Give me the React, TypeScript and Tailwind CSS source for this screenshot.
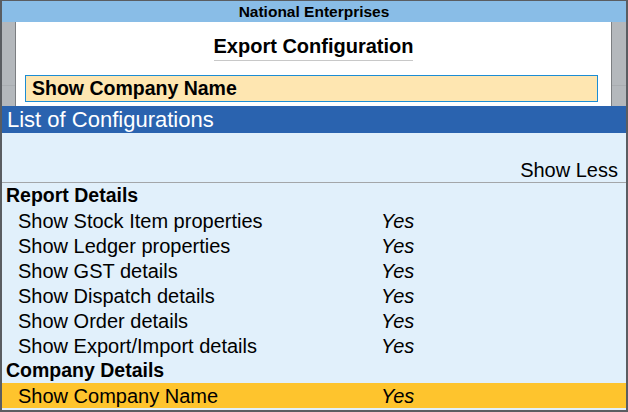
const reportRows = [
  "Show Stock Item properties",
  "Show Ledger properties",
  "Show GST details",
  "Show Dispatch details",
  "Show Order details",
  "Show Export/Import details",
]

function Row({ label, active }: { label: string; active?: boolean }) {
  return (
    <div className={`flex h-[25px] items-center text-[20px] ${active ? "bg-[#fec42d]" : ""}`}>
      <span className="w-[379px] pl-[16px]">{label}</span>
      <span className="italic">Yes</span>
    </div>
  )
}

export default function App() {
  return (
    <div
      className="w-[628px] h-[412px] overflow-hidden border-2 border-t border-[#5a5d61] text-black"
      style={{ fontFamily: '"Liberation Sans", Arial, sans-serif' }}
    >
      {/* Title bar */}
      <div className="h-[21px] bg-[#89bde7] flex items-center justify-center text-[15.5px] font-bold">
        National Enterprises
      </div>

      {/* Header panel */}
      <div className="flex h-[84px]">
        <div className="w-[14px] bg-[#b4b8bc] border-r border-[#7c7f82] flex flex-col">
          <div className="h-[64px] border-b border-[#a9adb1]" />
        </div>
        <div className="flex-1 bg-white flex flex-col items-center">
          <div className="mt-[13px] pb-[3px] border-b border-[#c8c8c8] text-[20px] font-bold leading-[22px]">
            Export Configuration
          </div>
          <div className="mt-[14px] w-[573px] h-[27px] bg-[#fee6b1] border border-[#1c8dd4] flex items-center pl-[6px] text-[19.5px] font-bold self-start ml-[9px]">
            Show Company Name
          </div>
        </div>
        <div className="w-[15px] bg-[#b4b8bc] border-l border-[#7c7f82] flex flex-col">
          <div className="h-[64px] border-b border-[#a9adb1]" />
        </div>
      </div>

      {/* Section bar */}
      <div className="h-[27px] bg-[#2a63af] text-white text-[22px] flex items-center pl-[5px]">
        List of Configurations
      </div>

      {/* List */}
      <div className="bg-[#e1f0fb] h-[277px]">
        <div className="h-[25px]" />
        <div className="h-[25px] flex items-center justify-end pr-[8px] text-[20px] border-b border-[#a3a6a9]">
          Show Less
        </div>
        <div className="h-[25px] flex items-center pl-[4px] text-[19.5px] font-bold">Report Details</div>
        {reportRows.map((r) => (
          <Row key={r} label={r} />
        ))}
        <div className="h-[25px] flex items-center pl-[4px] text-[19.5px] font-bold">Company Details</div>
        <Row label="Show Company Name" active />
      </div>
    </div>
  )
}
